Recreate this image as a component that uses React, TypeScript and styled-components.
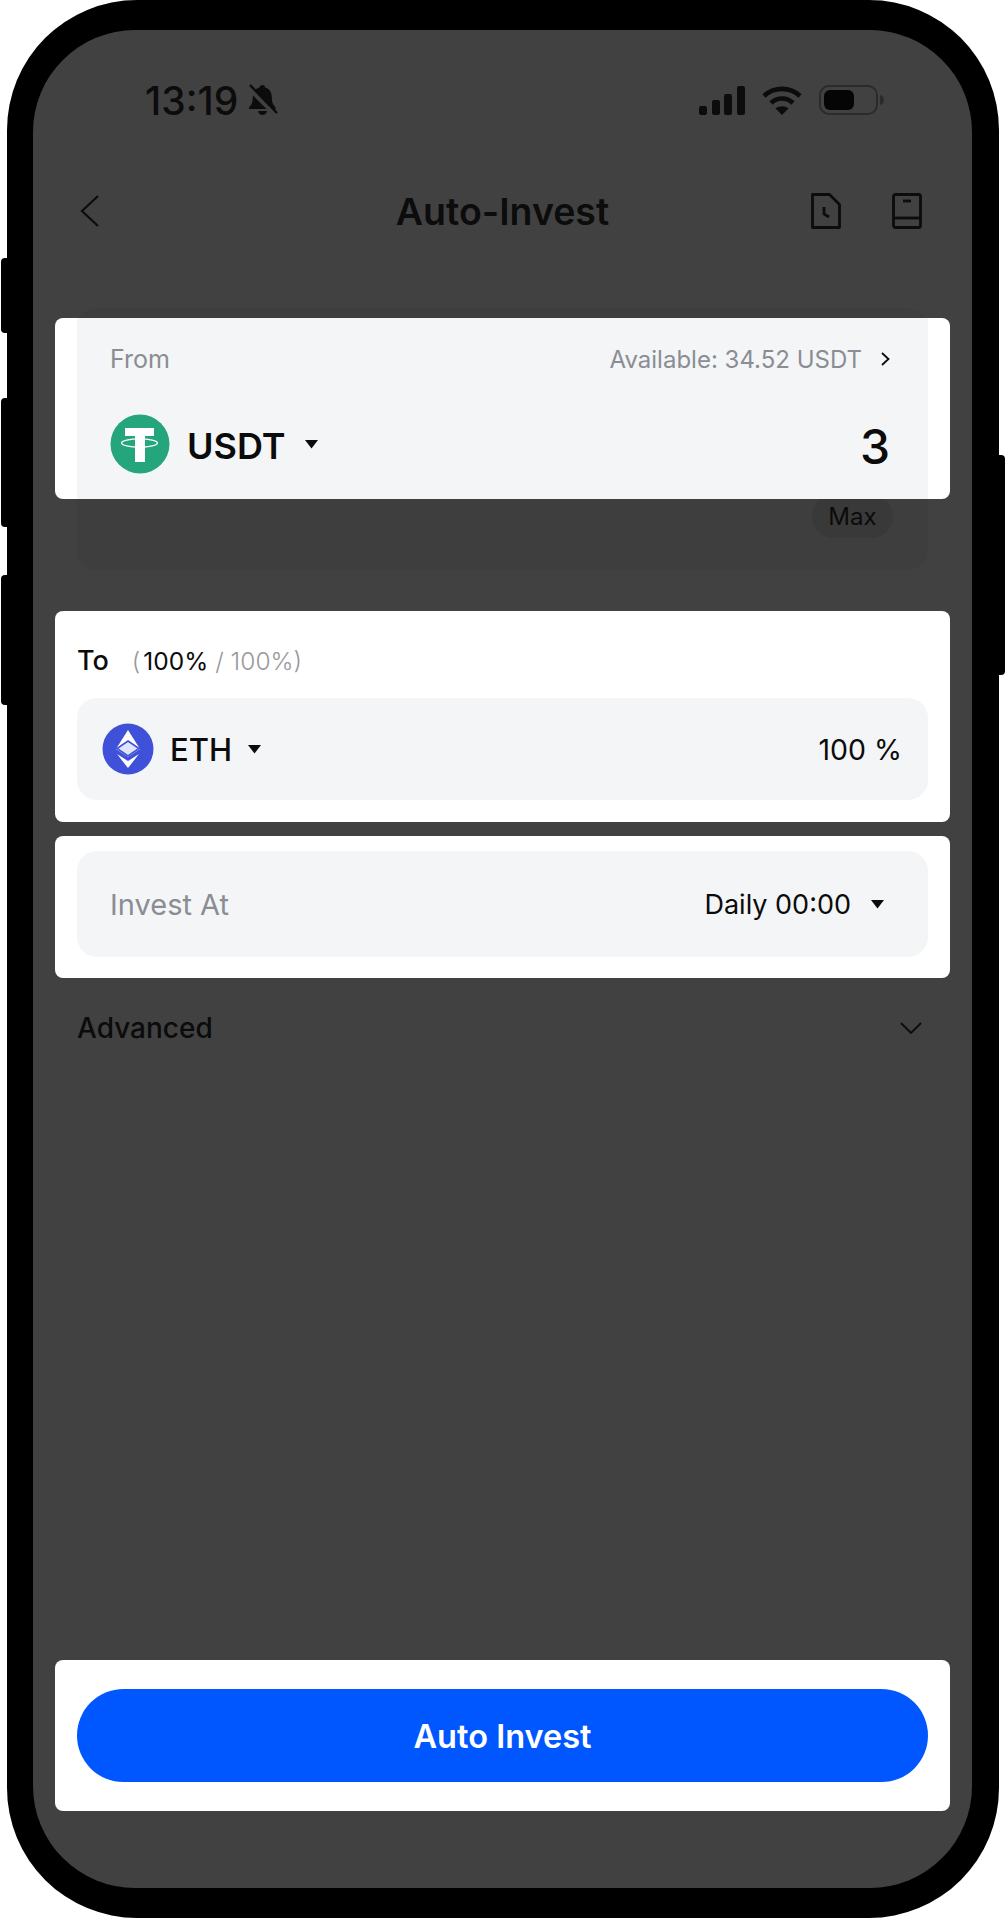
import styled, { createGlobalStyle } from "styled-components";

const GlobalStyle = createGlobalStyle`
  * { box-sizing: border-box; }
  html, body { margin: 0; padding: 0; background: #fff; }
  body { font-family: Inter, "Liberation Sans", sans-serif; color: #0b0b0b; }
`;

const Stage = styled.div`
  position: relative;
  width: 1005px;
  height: 1920px;
  padding: 0 6px 2px 7px;
`;

const SideButton = styled.div<{ $side: "left" | "right"; $top: number; $height: number }>`
  position: absolute;
  top: ${(p) => p.$top}px;
  height: ${(p) => p.$height}px;
  width: 12px;
  background: #000;
  border-radius: 4px;
  ${(p) => (p.$side === "left" ? "left: 1px;" : "right: 0;")}
`;

const PhoneBody = styled.div`
  position: relative;
  height: 100%;
  padding: 30px 27px 30px 26px;
  background: #000;
  border-radius: 130px;
`;

const Screen = styled.div`
  display: flex;
  flex-direction: column;
  height: 100%;
  padding: 0 44px 77px;
  background: #414141;
  border-radius: 102px;
`;

const StatusBar = styled.div`
  display: flex;
  align-items: center;
  justify-content: space-between;
  height: 50px;
  margin-top: 45px;
  padding: 0 43px 0 68px;
`;

const StatusGroup = styled.div<{ $gap: number }>`
  display: flex;
  align-items: center;
  gap: ${(p) => p.$gap}px;
`;

const Time = styled.span`
  font-size: 39px;
  font-weight: 500;
  color: #0c0c0c;
`;

const NavBar = styled.div`
  display: grid;
  grid-template-columns: 1fr auto 1fr;
  align-items: center;
  height: 60px;
  margin-top: 56px;
`;

const NavLeft = styled.div`
  display: flex;
  padding-left: 3px;
`;

const NavRight = styled.div`
  display: flex;
  justify-content: flex-end;
  gap: 51px;
  padding-right: 6px;
`;

const Title = styled.h1`
  margin: 0;
  font-size: 37.5px;
  font-weight: 600;
  color: #0c0c0c;
`;

const DimPanel = styled.div`
  display: flex;
  flex-direction: column;
  align-items: flex-end;
  margin-top: 67px;
  padding: 10px 35px 32px;
  background: #3e3e3e;
  border-radius: 20px;
`;

const Spot = styled.section<{ $mt?: number; $pad: string; $height: number }>`
  position: relative;
  z-index: 1;
  height: ${(p) => p.$height}px;
  margin: ${(p) => p.$mt ?? 0}px -22px 0;
  padding: ${(p) => p.$pad};
  background: #fff;
  border-radius: 8px;
`;

const FromSpot = styled(Spot)`
  align-self: stretch;
  margin: 0 -57px 0;
`;

const FieldPanel = styled.div<{ $height?: number; $pad: string }>`
  display: flex;
  align-items: center;
  justify-content: space-between;
  height: ${(p) => (p.$height ? `${p.$height}px` : "100%")};
  padding: ${(p) => p.$pad};
  background: #f4f5f7;
  border-radius: 20px;
`;

const FromPanel = styled.div`
  height: 100%;
  padding: 0 38px 0 33px;
  background: #f4f5f7;
`;

const FromTop = styled.div`
  display: flex;
  align-items: center;
  justify-content: space-between;
  height: 82px;
`;

const Muted = styled.span<{ $size: number }>`
  font-size: ${(p) => p.$size}px;
  color: #8a8d93;
`;

const Available = styled.div`
  display: flex;
  align-items: center;
  gap: 19px;
`;

const FromBottom = styled.div`
  display: flex;
  align-items: center;
  justify-content: space-between;
  height: 60px;
  margin-top: 14px;
`;

const Coin = styled.div<{ $gap: number; $caretGap: number }>`
  display: flex;
  align-items: center;
  gap: ${(p) => p.$gap}px;

  > span {
    margin-right: ${(p) => p.$caretGap - p.$gap}px;
  }
`;

const CoinName = styled.span<{ $size: number; $weight: number; $drop?: number }>`
  padding-top: ${(p) => p.$drop ?? 0}px;
  font-size: ${(p) => p.$size}px;
  font-weight: ${(p) => p.$weight};
`;

const Amount = styled.span`
  padding-top: 4px;
  font-size: 48px;
  font-weight: 500;
`;

const MaxPill = styled.div`
  display: flex;
  align-items: center;
  justify-content: center;
  width: 81px;
  height: 43px;
  margin-top: -4px;
  font-size: 24px;
  background: #393939;
  border-radius: 22px;
  color: #0b0b0b;
`;

const ToHeader = styled.div`
  display: flex;
  align-items: center;
  gap: 23px;
  height: 87px;
  padding-top: 12px;
`;

const ToLabel = styled.span`
  font-size: 27px;
  font-weight: 500;
`;

const Ratio = styled.span`
  font-size: 24.5px;
  font-weight: 300;
  color: #96999e;

  b {
    margin-left: 3px;
    font-weight: 400;
    color: #0b0b0b;
  }
`;

const PlainValue = styled.span<{ $size: number }>`
  font-size: ${(p) => p.$size}px;
`;

const ValueGroup = styled.div`
  display: flex;
  align-items: center;
  gap: 19px;
`;

const Advanced = styled.div`
  display: flex;
  align-items: center;
  justify-content: space-between;
  height: 40px;
  margin-top: 30px;
  padding-right: 6px;
  font-size: 28px;
  font-weight: 500;
`;

const Footer = styled(Spot)`
  margin-top: auto;
`;

const CtaButton = styled.button`
  display: block;
  width: 100%;
  height: 93px;
  padding-top: 2px;
  border: 0;
  border-radius: 47px;
  background: #0057ff;
  color: #fff;
  font-family: inherit;
  font-size: 32.5px;
  font-weight: 600;
`;

const Caret = () => (
  <svg width="15" height="10" viewBox="0 0 15 10">
    <path d="M1 1h13L7.5 9.5z" fill="#0b0b0b" />
  </svg>
);

const BellOff = () => (
  <svg width="31" height="32" viewBox="0 0 31 32">
    <path
      d="M15.500 1c1.500 0 2.500 1 2.700 2.500 4 1 6.300 4.500 6.500 8.500l.4 5c.2 2.500 2 4.500 3.500 6.500V25H2v-1.500c1.500-2 3.300-4 3.500-6.500l.4-5c.2-4 2.500-7.500 6.500-8.500C12.700 2 14 1 15.500 1z"
      fill="#0c0c0c"
    />
    <path d="M11 27h9c-.5 2.500-2.300 4-4.500 4S11.500 29.500 11 27z" fill="#0c0c0c" />
    <path d="M1 3 28 30" stroke="#414141" strokeWidth="5" />
    <path d="M3 1 30 29" stroke="#0c0c0c" strokeWidth="2.400" />
  </svg>
);

const Signal = () => (
  <svg width="46" height="29" viewBox="0 0 46 29" fill="#0c0c0c">
    <rect x="0" y="20" width="8" height="9" rx="2" />
    <rect x="13" y="14" width="8" height="15" rx="2" />
    <rect x="25" y="8" width="8" height="21" rx="2" />
    <rect x="38" y="0" width="8" height="29" rx="2" />
  </svg>
);

const Wifi = () => (
  <svg width="40" height="29" viewBox="0 0 40 29" fill="none" stroke="#0c0c0c" strokeWidth="4.600">
    <path d="M2 10C12 .5 28 .5 38 10" />
    <path d="M9 17c6-6 16-6 22 0" />
    <path d="M20 29l-6.500-6.500c3.500-3 9.500-3 13 0z" fill="#0c0c0c" stroke="none" />
  </svg>
);

const Battery = () => (
  <svg width="66" height="30" viewBox="0 0 66 30">
    <rect x="1" y="1" width="57" height="28" rx="9" fill="none" stroke="#2b2b2b" strokeWidth="2" />
    <rect x="5" y="5" width="30" height="20" rx="6" fill="#050505" />
    <path d="M61 10c3 .5 4 3 4 5s-1 4.500-4 5z" fill="#2b2b2b" />
  </svg>
);

const BackIcon = () => (
  <svg width="20" height="32" viewBox="0 0 20 32" fill="none" stroke="#0c0c0c" strokeWidth="2.200">
    <path d="M18 1 2 16l16 15" />
  </svg>
);

const HistoryIcon = () => (
  <svg width="30" height="36" viewBox="0 0 30 36" fill="none" stroke="#0c0c0c" strokeWidth="2.800">
    <path d="M1.500 1.500h17l10 10v23h-27z" strokeLinejoin="round" />
    <path d="M13 14v7l5 3" />
  </svg>
);

const BookIcon = () => (
  <svg width="30" height="36" viewBox="0 0 30 36" fill="none" stroke="#0c0c0c" strokeWidth="2.800">
    <rect x="1.500" y="1.500" width="27" height="33" rx="2" strokeLinejoin="round" />
    <path d="M1.500 25h27" />
    <path d="M11 8h8" />
  </svg>
);

const SmallChevron = () => (
  <svg width="9" height="14" viewBox="0 0 9 14" fill="none" stroke="#0b0b0b" strokeWidth="1.800">
    <path d="M1 1l6.500 6L1 13" />
  </svg>
);

const ChevronDown = () => (
  <svg width="22" height="13" viewBox="0 0 22 13" fill="none" stroke="#0c0c0c" strokeWidth="1.900">
    <path d="M1 1l10 10L21 1" />
  </svg>
);

const TetherLogo = () => (
  <svg width="60" height="60" viewBox="0 0 60 60">
    <circle cx="30" cy="30" r="29.500" fill="#25a57b" />
    <path d="M15 14h29v8H35v26H25V22H15z" fill="#fff" />
    <ellipse cx="29.500" cy="29" rx="18" ry="4.200" fill="none" stroke="#fff" strokeWidth="1.300" />
  </svg>
);

const EthLogo = () => (
  <svg width="52" height="52" viewBox="0 0 52 52">
    <circle cx="26" cy="26" r="25.500" fill="#3f51d9" />
    <path d="M26 7 38 26 26 34 14 26z" fill="#fff" />
    <path d="M26 18 37 25.500 26 33 15 25.500z" fill="#dfe3fb" stroke="#3f51d9" strokeWidth="1.600" />
    <path d="M15 31 26 38 37 31 26 45z" fill="#fff" />
  </svg>
);

export default function App() {
  return (
    <>
      <GlobalStyle />
      <Stage>
        <SideButton $side="left" $top={258} $height={75} />
        <SideButton $side="left" $top={398} $height={129} />
        <SideButton $side="left" $top={575} $height={130} />
        <SideButton $side="right" $top={455} $height={220} />
        <PhoneBody>
          <Screen>
            <StatusBar>
              <StatusGroup $gap={9}>
                <Time>13:19</Time>
                <BellOff />
              </StatusGroup>
              <StatusGroup $gap={17}>
                <Signal />
                <Wifi />
                <Battery />
              </StatusGroup>
            </StatusBar>

            <NavBar>
              <NavLeft>
                <BackIcon />
              </NavLeft>
              <Title>Auto-Invest</Title>
              <NavRight>
                <HistoryIcon />
                <BookIcon />
              </NavRight>
            </NavBar>

            <DimPanel>
              <FromSpot $pad="0 22px" $height={181}>
                <FromPanel>
                  <FromTop>
                    <Muted $size={25}>From</Muted>
                    <Available>
                      <Muted $size={24}>Available: 34.52 USDT</Muted>
                      <SmallChevron />
                    </Available>
                  </FromTop>
                  <FromBottom>
                    <Coin $gap={17} $caretGap={18}>
                      <TetherLogo />
                      <CoinName $size={36} $weight={600} $drop={3}>USDT</CoinName>
                      <Caret />
                    </Coin>
                    <Amount>3</Amount>
                  </FromBottom>
                </FromPanel>
              </FromSpot>
              <MaxPill>Max</MaxPill>
            </DimPanel>

            <Spot $mt={41} $pad="0 22px" $height={211}>
              <ToHeader>
                <ToLabel>To</ToLabel>
                <Ratio>
                  (<b>100%</b> / 100%)
                </Ratio>
              </ToHeader>
              <FieldPanel $height={102} $pad="0 26px 0 25px">
                <Coin $gap={16} $caretGap={15}>
                  <EthLogo />
                  <CoinName $size={31} $weight={500}>ETH</CoinName>
                  <Caret />
                </Coin>
                <PlainValue $size={28.500}>100 %</PlainValue>
              </FieldPanel>
            </Spot>

            <Spot $mt={14} $pad="15px 22px 21px" $height={142}>
              <FieldPanel $pad="0 43px 0 33px">
                <Muted $size={29}>Invest At</Muted>
                <ValueGroup>
                  <PlainValue $size={27}>Daily 00:00</PlainValue>
                  <Caret />
                </ValueGroup>
              </FieldPanel>
            </Spot>

            <Advanced>
              Advanced
              <ChevronDown />
            </Advanced>

            <Footer $pad="29px 22px" $height={151}>
              <CtaButton>Auto Invest</CtaButton>
            </Footer>
          </Screen>
        </PhoneBody>
      </Stage>
    </>
  );
}
